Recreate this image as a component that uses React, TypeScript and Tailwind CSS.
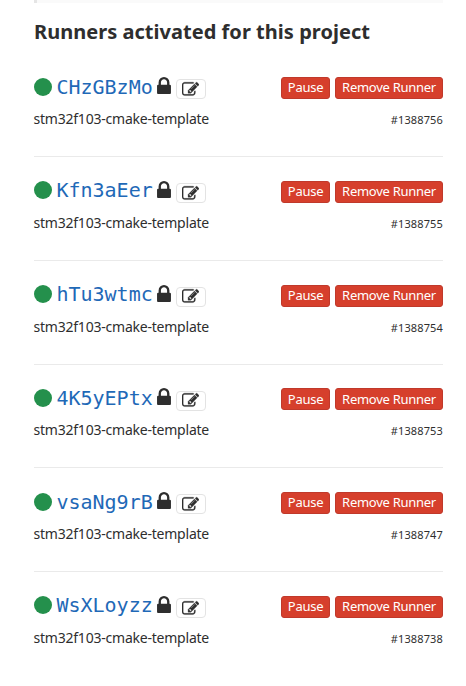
const runners = [
  { token: "CHzGBzMo", id: "#1388756" },
  { token: "Kfn3aEer", id: "#1388755" },
  { token: "hTu3wtmc", id: "#1388754" },
  { token: "4K5yEPtx", id: "#1388753" },
  { token: "vsaNg9rB", id: "#1388747" },
  { token: "WsXLoyzz", id: "#1388738" },
];

function LockIcon() {
  return (
    <svg viewBox="0 128 1152 1408" className="mt-[6.8px] ml-[4.4px] h-[17px] w-[14px] shrink-0 fill-[#2e2e2e]">
      <path d="M320 768h512v-192q0-106-75-181t-181-75-181 75-75 181v192zm832 96v576q0 40-28 68t-68 28h-960q-40 0-68-28t-28-68v-576q0-40 28-68t68-28h32v-192q0-184 132-316t316-132 316 132 132 316v192h32q40 0 68 28t28 68z" />
    </svg>
  );
}

function EditIcon() {
  return (
    <svg viewBox="0 0 1792 1792" className="mr-[1px] h-[17px] w-[17px] shrink-0 fill-[#2e2e2e] stroke-[#2e2e2e] stroke-[30]">
      <path d="M888 1184l116-116-152-152-116 116v56h96v96h56zm440-720q-16-16-33 1l-350 350q-17 17-1 33t33-1l350-350q17-17 1-33zm80 594v190q0 119-84.5 203.5t-203.5 84.5h-832q-119 0-203.5-84.5t-84.5-203.5v-832q0-119 84.5-203.5t203.5-84.5h832q63 0 117 25 15 7 18 23 3 17-9 29l-49 49q-14 14-32 8-23-6-45-6h-832q-66 0-113 47t-47 113v832q0 66 47 113t113 47h832q66 0 113-47t47-113v-126q0-13 9-22l64-64q15-15 35-7t20 29zm-96-738l288 288-672 672h-288v-288zm444 132l-92 92-288-288 92-92q28-28 68-28t68 28l152 152q28 28 28 68t-28 68z" />
    </svg>
  );
}

function Runner({ token, id }: { token: string; id: string }) {
  return (
    <li className="h-[103.75px] border-b border-[#eaeaea] pt-[17px] last:border-b-0">
      <div className="-ml-[0.4px] flex h-[40px] items-start">
        <span className="mt-[7.4px] h-[18px] w-[18px] shrink-0 rounded-full bg-[#24904c]" />
        <a className="mt-[3.4px] ml-[4.8px] w-[96px] font-['DejaVu_Sans_Mono',monospace] text-[20px] leading-[26px] text-[#1f69b7]">{token}</a>
        <LockIcon />
        <button className="mt-[9.1px] ml-[5.3px] flex h-[20px] w-[30px] shrink-0 items-center justify-center rounded-[4px] border border-[#e3e3e3] bg-white">
          <EditIcon />
        </button>
        <div className="mt-[6.9px] ml-auto flex gap-[5px] text-[13px] tracking-[-0.27px] text-white">
          <button className="flex h-[22px] w-[49px] items-center justify-center rounded-[3px] border border-[#c0392b] bg-[#d63f2c] whitespace-nowrap">Pause</button>
          <button className="flex h-[22px] w-[108px] items-center justify-center rounded-[3px] border border-[#c0392b] bg-[#d63f2c] whitespace-nowrap">Remove Runner</button>
        </div>
      </div>
      <div className="flex items-start justify-between leading-[20px]">
        <span className="-mt-[1.1px] -ml-[0.5px] text-[14px] tracking-[-0.22px]">stm32f103-cmake-template</span>
        <small className="-mt-[0.15px] text-[11px] tracking-[0.14px]">{id}</small>
      </div>
    </li>
  );
}

export default function App() {
  return (
    <main className="h-[686px] w-[466px] overflow-hidden bg-white font-['Noto_Sans',sans-serif] text-[#2e2e2e]">
      <div className="ml-[34px] h-[3px] w-[409px] border-l-[3px] border-[#e5e5e5] bg-[#fafafa]" />
      <h4 className="mt-[16px] ml-[34px] h-[34.25px] text-[20px] leading-[26px] font-bold tracking-[0.03px] whitespace-nowrap">Runners activated for this project</h4>
      <ul className="ml-[34px] w-[409px]">
        {runners.map((r) => (
          <Runner key={r.id} {...r} />
        ))}
      </ul>
    </main>
  );
}
